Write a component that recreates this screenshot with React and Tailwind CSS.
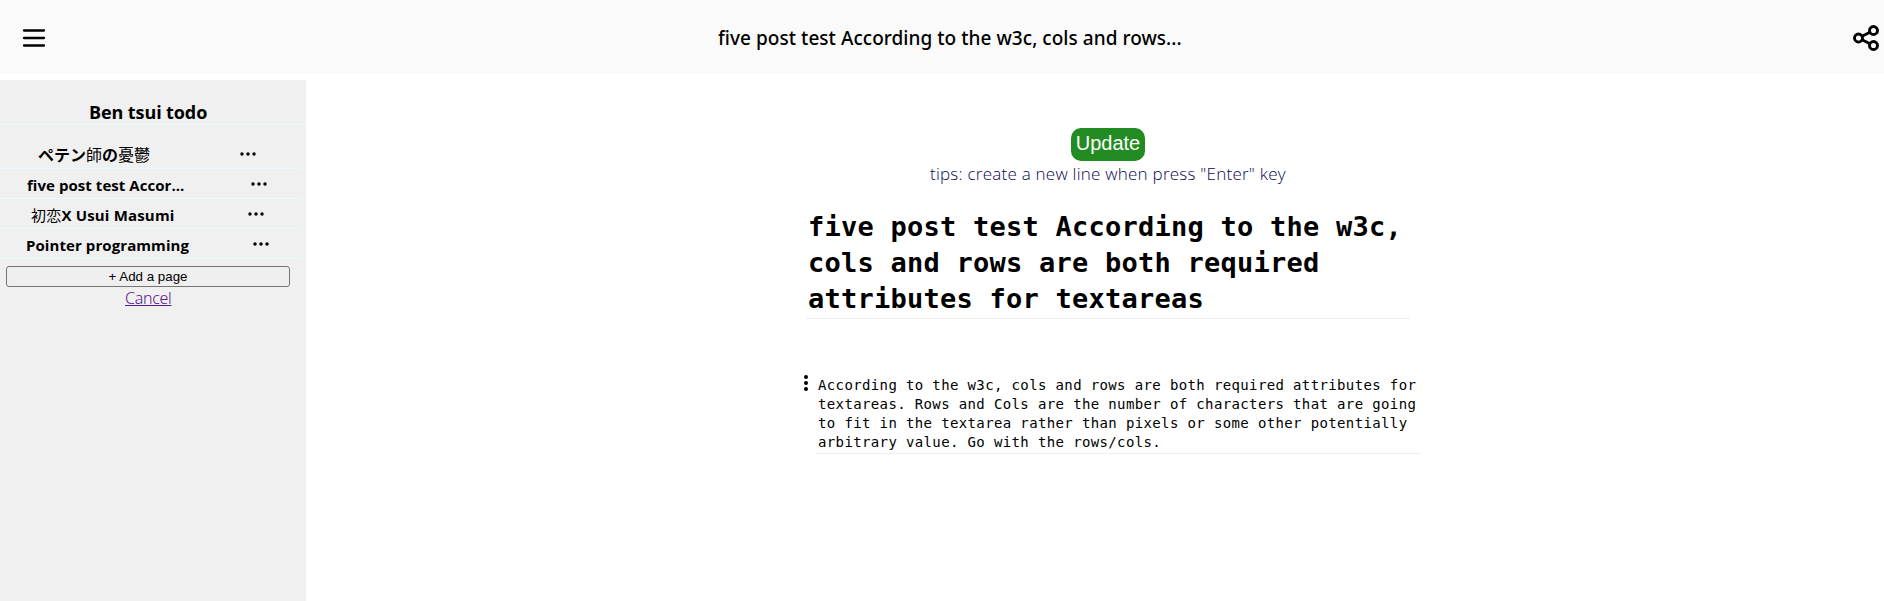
function Dots({ className, vertical = false }) {
  return (
    <svg
      className={className}
      width={vertical ? 4 : 16}
      height={vertical ? 16 : 4}
      viewBox={vertical ? '0 0 4 16' : '0 0 16 4'}
      fill="black"
    >
      <circle cx="2" cy="2" r={vertical ? 2 : 1.75} />
      <circle cx={vertical ? 2 : 8} cy={vertical ? 8 : 2} r={vertical ? 2 : 1.75} />
      <circle cx={vertical ? 2 : 14} cy={vertical ? 14 : 2} r={vertical ? 2 : 1.75} />
    </svg>
  );
}

function PageRow({ title, rowClass, titleClass, dotsClass }) {
  return (
    <li className={`flex w-[301px] items-start border-b border-[#e0ffff] ${rowClass}`}>
      <span className={`shrink-0 whitespace-nowrap font-bold leading-[22px] ${titleClass}`}>{title}</span>
      <button aria-label="Page options" className={dotsClass}>
        <Dots className="block" />
      </button>
    </li>
  );
}

function Kanji({ children }) {
  return <span className="font-normal">{children}</span>;
}

function Header() {
  return (
    <header className="flex h-[74px] items-center bg-[#fafafa]">
      <button aria-label="Menu" className="ml-[22px] mt-0.5 h-6 w-6">
        <svg width="24" height="24" viewBox="0 0 24 24" stroke="black" strokeWidth="2.3" strokeLinecap="round">
          <path d="M2 4.5H22M2 12H22M2 19.5H22" />
        </svg>
      </button>
      <h1 className="ml-[672px] mt-0.5 w-[463px] whitespace-nowrap font-['Noto_Sans',sans-serif] text-[19px] font-medium leading-7 tracking-[0.045px]">
        five post test According to the w3c, cols and rows...
      </h1>
      <button aria-label="Share" className="ml-auto mr-[5px] mt-0.5">
        <svg width="26" height="26" viewBox="0 0 26 26" fill="none" stroke="black" strokeWidth="2.9">
          <circle cx="5.5" cy="13" r="4" />
          <circle cx="20.5" cy="5.5" r="4" />
          <circle cx="20.5" cy="20.5" r="4" />
          <path d="M9 11.2L17 7.2M9 14.8L17 18.8" />
        </svg>
      </button>
    </header>
  );
}

function Sidebar() {
  return (
    <aside className="h-[521px] w-[306px] bg-[#f0f0f0]">
      <h2 className="h-[45px] whitespace-nowrap border-b border-[#e0ffff] pl-[89px] pt-[19px] text-[18px] font-bold leading-[26px] tracking-[-0.1px]">
        Ben tsui todo
      </h2>
      <ul className="text-[15px]">
        <PageRow
          title={<>ペテン<Kanji>師</Kanji>の<Kanji>憂鬱</Kanji></>}
          rowClass="h-11 pt-[19px]"
          titleClass="ml-[38px] w-[202px] text-[16px]"
          dotsClass="mt-[8px]"
        />
        <PageRow title="five post test Accor..." rowClass="h-[30px] pt-[5px]" titleClass="ml-[27px] w-[224px] tracking-[0.05px]" dotsClass="mt-[8px]" />
        <PageRow
          title={<><Kanji>初恋</Kanji>X Usui Masumi</>}
          rowClass="h-[30px] pt-[5px]"
          titleClass="ml-[31px] w-[217px] tracking-[0.18px]"
          dotsClass="mt-[8px]"
        />
        <PageRow title="Pointer programming" rowClass="h-[30px] pt-[5px]" titleClass="ml-[26px] w-[227px] tracking-[0.08px]" dotsClass="mt-[8px]" />
      </ul>
      <button className="ml-[6px] mt-[7px] flex h-[21px] w-[284px] items-center justify-center rounded-[3px] border border-[#767676] bg-[#efefef] font-['Liberation_Sans',sans-serif] text-[13.33px]">
        + Add a page
      </button>
      <a className="-mt-px ml-[125px] block font-['Noto_Sans',sans-serif] text-[16px] font-light leading-6 tracking-[-0.3px] text-[#551a8b] underline">Cancel</a>
    </aside>
  );
}

function Editor() {
  return (
    <main className="flex-1 pt-12">
      <div className="ml-[624px] flex w-[356px] flex-col items-center">
        <button className="h-[33px] w-[74px] rounded-[10px] bg-[#228b22] pb-0.5 font-['Liberation_Sans',sans-serif] text-[20px] leading-[31px] text-white">
          Update
        </button>
        <p className="h-[26px] w-[356px] whitespace-nowrap text-[17px] font-light leading-[26px] tracking-[0.24px] text-[#08084e]">
          tips: create a new line when press "Enter" key
        </p>
      </div>
      <h2 className="ml-[500px] mt-[21px] h-[111px] w-[604px] border-b border-[#eeeeee] pl-[2px] pt-px font-['DejaVu_Sans_Mono',monospace] text-[27px] font-bold leading-9 tracking-[0.245px]">
        five post test According to the w3c, cols and rows are both required attributes for textareas
      </h2>
      <div className="ml-[498px] mt-[55px] flex">
        <Dots vertical className="mt-[1px]" />
        <p className="ml-[8px] h-[80px] w-[604px] border-b border-[#eeeeee] pl-[2px] pt-[2px] font-['DejaVu_Sans_Mono',monospace] text-[14px] leading-[19px] tracking-[0.369px]">
          According to the w3c, cols and rows are both required attributes for textareas. Rows and Cols are the number of characters that are going to fit in the textarea rather than pixels or some other potentially arbitrary value. Go with the rows/cols.
        </p>
      </div>
    </main>
  );
}

export default function App() {
  return (
    <div className="h-[601px] overflow-hidden bg-white font-['Open_Sans','Noto_Sans_CJK_JP',sans-serif] text-black">
      <Header />
      <div className="mt-1.5 flex">
        <Sidebar />
        <Editor />
      </div>
    </div>
  );
}
